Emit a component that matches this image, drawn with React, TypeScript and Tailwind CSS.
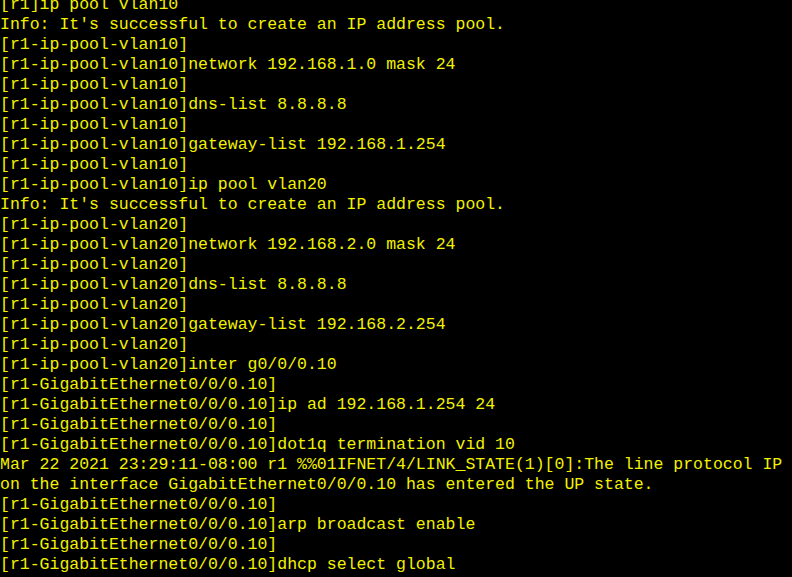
const lines = [
  '[r1]ip pool vlan10',
  "Info: It's successful to create an IP address pool.",
  '[r1-ip-pool-vlan10]',
  '[r1-ip-pool-vlan10]network 192.168.1.0 mask 24',
  '[r1-ip-pool-vlan10]',
  '[r1-ip-pool-vlan10]dns-list 8.8.8.8',
  '[r1-ip-pool-vlan10]',
  '[r1-ip-pool-vlan10]gateway-list 192.168.1.254',
  '[r1-ip-pool-vlan10]',
  '[r1-ip-pool-vlan10]ip pool vlan20',
  "Info: It's successful to create an IP address pool.",
  '[r1-ip-pool-vlan20]',
  '[r1-ip-pool-vlan20]network 192.168.2.0 mask 24',
  '[r1-ip-pool-vlan20]',
  '[r1-ip-pool-vlan20]dns-list 8.8.8.8',
  '[r1-ip-pool-vlan20]',
  '[r1-ip-pool-vlan20]gateway-list 192.168.2.254',
  '[r1-ip-pool-vlan20]',
  '[r1-ip-pool-vlan20]inter g0/0/0.10',
  '[r1-GigabitEthernet0/0/0.10]',
  '[r1-GigabitEthernet0/0/0.10]ip ad 192.168.1.254 24',
  '[r1-GigabitEthernet0/0/0.10]',
  '[r1-GigabitEthernet0/0/0.10]dot1q termination vid 10',
  'Mar 22 2021 23:29:11-08:00 r1 %%01IFNET/4/LINK_STATE(1)[0]:The line protocol IP',
  'on the interface GigabitEthernet0/0/0.10 has entered the UP state.',
  '[r1-GigabitEthernet0/0/0.10]',
  '[r1-GigabitEthernet0/0/0.10]arp broadcast enable',
  '[r1-GigabitEthernet0/0/0.10]',
  '[r1-GigabitEthernet0/0/0.10]dhcp select global',
]

export default function App() {
  return (
    <div className="h-[577px] w-[792px] overflow-hidden bg-black flex flex-col justify-end pb-[2px]">
      <pre className="font-['Liberation_Mono','Courier_New',monospace] text-[16.5px] leading-[20px] text-[#f2f200] whitespace-pre">
        {lines.map((l, i) => (
          <div key={i}>{l}</div>
        ))}
      </pre>
    </div>
  )
}
